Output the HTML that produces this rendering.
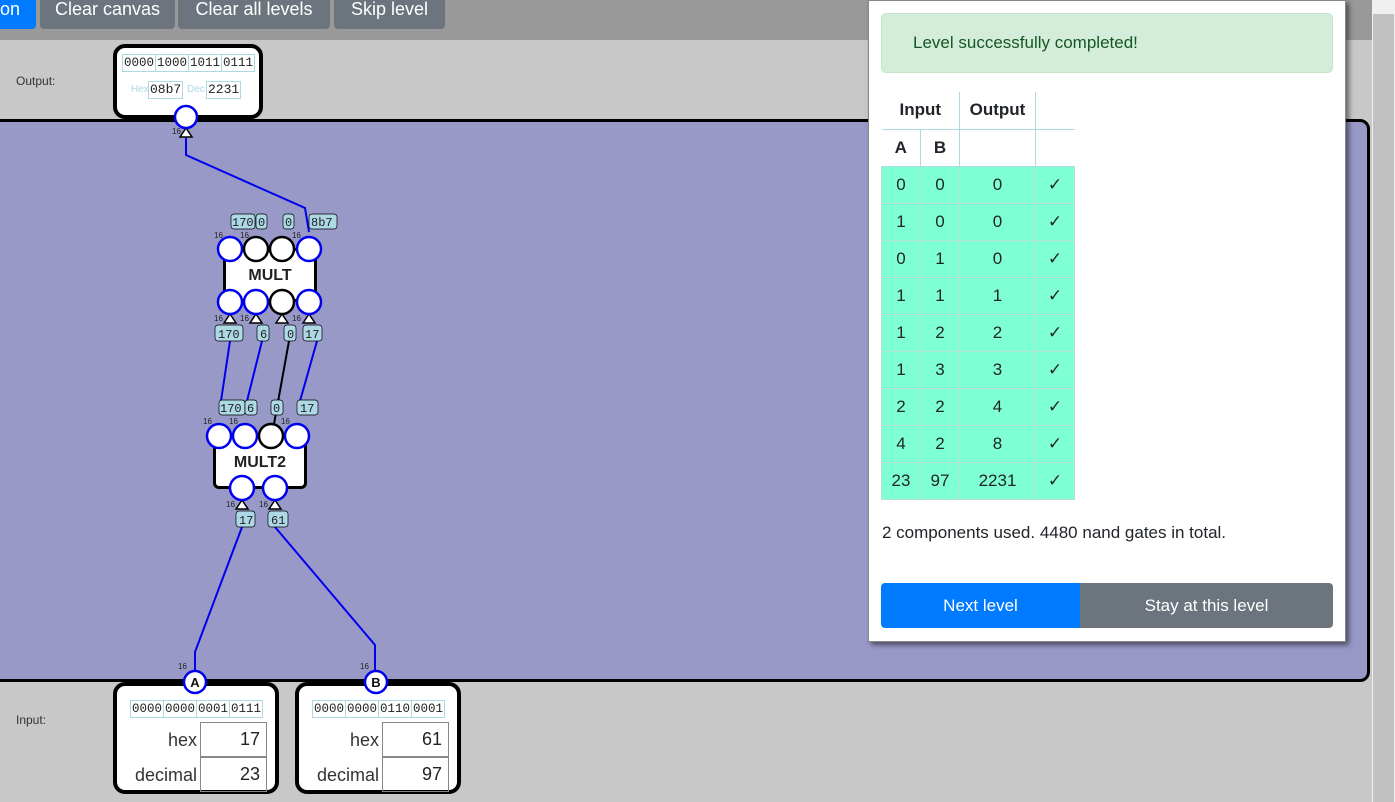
<!DOCTYPE html>
<html><head><style>
*{box-sizing:border-box;margin:0;padding:0}
body{width:1395px;height:802px;overflow:hidden;background:#c8c8c8;font-family:"Liberation Sans",sans-serif;position:relative}
.top{position:absolute;left:0;top:0;width:1372px;height:40px;background:#999}
.btn{position:absolute;top:-6px;height:35px;border-radius:4px;color:#fff;font-size:18px;line-height:30px;padding:0;text-align:center;white-space:nowrap;background:#6c757d}
.scroll{position:absolute;left:1372px;top:0;width:23px;height:802px;background:#f0f0f0}
.scroll div{position:absolute;left:1px;top:14px;width:21px;height:788px;background:#c1c1c1}
.canvas{position:absolute;left:-10px;top:119px;width:1380px;height:563px;background:#9999c8;border:3px solid #000;border-radius:10px}
.lbl{position:absolute;font-size:12px;color:#333}
.box{position:absolute;background:#fff;border:4px solid #000;border-radius:12px}
.mono{font-family:"Liberation Mono",monospace;font-size:12.5px;color:#222}
.bits{position:absolute;display:flex;border:1px solid #add8e6;white-space:nowrap}
.bits span{border-right:1px solid #add8e6;padding:0 1px;line-height:16px}
.bits span:last-child{border-right:0}
.panel{position:absolute;left:868px;top:0;width:478px;height:642px;background:#fff;box-shadow:3px 3px 5px rgba(0,0,0,.5);border:1px solid #888}
.alert{position:absolute;left:12px;top:12px;width:452px;height:60px;background:#d4edda;border:1px solid #c3e6cb;border-radius:5px;color:#155724;font-size:17px;line-height:58px;padding-left:31px}
table{position:absolute;left:12px;top:91px;border-collapse:collapse;font-size:17px;color:#212529}
td,th{border:1px solid #add8e6;text-align:center;height:37px;padding:0}
th{font-weight:bold}
tr.ok td{background:#7fffd4;border-color:#b8e0d0}
.inp{position:absolute;right:8px;width:67px;height:35px;border:1px solid #888;text-align:right;font-size:18px;line-height:33px;padding-right:6px;color:#222}
.it{position:absolute;font-size:18px;color:#333}
</style></head><body>
<div class="top"></div>
<div class="btn" style="left:-10px;background:#007bff;width:46px;text-align:left;padding-left:10px">on</div>
<div class="btn" style="left:40px;width:135px">Clear canvas</div>
<div class="btn" style="left:178px;width:152px">Clear all levels</div>
<div class="btn" style="left:334px;width:111px">Skip level</div>
<div class="scroll"><div></div></div>
<div class="canvas"></div>
<div class="lbl" style="left:16px;top:74px">Output:</div>
<div class="lbl" style="left:16px;top:713px">Input:</div>

<div class="box" style="left:113px;top:44px;width:150px;height:75px">
 <div class="bits mono" style="left:5px;top:6px"><span>0000</span><span>1000</span><span>1011</span><span>0111</span></div>
 <div style="position:absolute;left:14px;top:33px;color:#add8e6;font-size:10px;line-height:18px">Hex</div>
 <div class="bits mono" style="left:31px;top:33px;font-size:13px"><span>08b7</span></div>
 <div style="position:absolute;left:70px;top:33px;color:#add8e6;font-size:10px;line-height:18px">Dec</div>
 <div class="bits mono" style="left:89px;top:33px;font-size:13px"><span>2231</span></div>
</div>

<div class="box" style="left:223px;top:248px;width:94px;height:54px;border-width:3px;border-radius:6px"><div style="text-align:center;font-weight:bold;font-size:16px;margin-top:16px;color:#222">MULT</div></div>
<div class="box" style="left:213px;top:434px;width:94px;height:55px;border-width:3px;border-radius:6px"><div style="text-align:center;font-weight:bold;font-size:16px;margin-top:17px;color:#222">MULT2</div></div>

<div class="box" style="left:113px;top:682px;width:166px;height:112px">
 <div class="bits mono" style="left:13px;top:14px"><span>0000</span><span>0000</span><span>0001</span><span>0111</span></div>
 <div class="it" style="right:78px;top:44px">hex</div><div class="inp" style="top:36px">17</div>
 <div class="it" style="right:78px;top:79px">decimal</div><div class="inp" style="top:71px">23</div>
</div>
<div class="box" style="left:295px;top:682px;width:166px;height:112px">
 <div class="bits mono" style="left:13px;top:14px"><span>0000</span><span>0000</span><span>0110</span><span>0001</span></div>
 <div class="it" style="right:78px;top:44px">hex</div><div class="inp" style="top:36px">61</div>
 <div class="it" style="right:78px;top:79px">decimal</div><div class="inp" style="top:71px">97</div>
</div>

<svg width="1395" height="802" style="position:absolute;left:0;top:0">
<g fill="none" stroke="#0000ee" stroke-width="2">
<polyline points="186,138 186,155 305,208 309,232"/>
<line x1="230" y1="341" x2="221" y2="401"/>
<line x1="262" y1="341" x2="247" y2="401"/>
<line x1="317" y1="341" x2="300" y2="401"/>
<polyline points="242,527 195,652 195,672"/>
<polyline points="275,527 375,645 375,672"/>
</g>
<line x1="289" y1="341" x2="274" y2="424" stroke="#000" stroke-width="2"/>
<g font-family="Liberation Sans" font-size="8" fill="#222">
<text x="172" y="134">16</text>
<text x="214" y="238">16</text><text x="240" y="238">16</text><text x="292" y="238">16</text>
<text x="214" y="321">16</text><text x="240" y="321">16</text><text x="292" y="321">16</text>
<text x="203" y="424">16</text><text x="229" y="424">16</text><text x="281" y="424">16</text>
<text x="226" y="507">16</text><text x="259" y="507">16</text>
<text x="178" y="669">16</text><text x="360" y="669">16</text>
</g>
<g stroke="#000" stroke-width="1.5" fill="#fff">
<polygon points="186,128 180,137 192,137"/>
<polygon points="230,314 224,323 236,323"/><polygon points="256,314 250,323 262,323"/>
<polygon points="282,314 276,323 288,323"/><polygon points="309,314 303,323 315,323"/>
<polygon points="242,500 236,509 248,509"/><polygon points="275,500 269,509 281,509"/>
</g>
<g stroke-width="2.5" fill="#fff">
<circle cx="186" cy="117" r="11" stroke="#0000ee"/>
<circle cx="230" cy="249" r="12" stroke="#0000ee"/><circle cx="256" cy="249" r="12" stroke="#000"/>
<circle cx="282" cy="249" r="12" stroke="#000"/><circle cx="309" cy="249" r="12" stroke="#0000ee"/>
<circle cx="230" cy="302" r="12" stroke="#0000ee"/><circle cx="256" cy="302" r="12" stroke="#0000ee"/>
<circle cx="282" cy="302" r="12" stroke="#000"/><circle cx="309" cy="302" r="12" stroke="#0000ee"/>
<circle cx="219" cy="436" r="12" stroke="#0000ee"/><circle cx="245" cy="436" r="12" stroke="#0000ee"/>
<circle cx="271" cy="436" r="12" stroke="#000"/><circle cx="297" cy="436" r="12" stroke="#0000ee"/>
<circle cx="242" cy="488" r="12" stroke="#0000ee"/><circle cx="275" cy="488" r="12" stroke="#0000ee"/>
<circle cx="195" cy="682" r="11" stroke="#0000ee"/><circle cx="376" cy="682" r="11" stroke="#0000ee"/>
</g>
<g font-family="Liberation Sans" font-weight="bold" font-size="13" fill="#111" text-anchor="middle">
<text x="195" y="687">A</text><text x="376" y="687">B</text></g>
<g fill="#add8e6" stroke="#000" stroke-width="0.7">
<rect x="231" y="214" width="24" height="15" rx="3"/><rect x="256" y="214" width="11" height="15" rx="3"/>
<rect x="283" y="214" width="11" height="15" rx="3"/><rect x="309" y="214" width="28" height="15" rx="3"/>
<rect x="215" y="325" width="28" height="16" rx="3"/><rect x="257" y="325" width="12" height="16" rx="3"/>
<rect x="284" y="325" width="12" height="16" rx="3"/><rect x="303" y="325" width="19" height="16" rx="3"/>
<rect x="219" y="400" width="26" height="15" rx="3"/><rect x="245" y="400" width="12" height="15" rx="3"/>
<rect x="271" y="400" width="12" height="15" rx="3"/><rect x="297" y="400" width="21" height="15" rx="3"/>
<rect x="236" y="511" width="19" height="16" rx="3"/><rect x="268" y="511" width="20" height="16" rx="3"/>
</g>
<g font-family="Liberation Mono" font-size="12" fill="#222">
<text x="232" y="226">170</text><text x="258" y="226">0</text><text x="285" y="226">0</text><text x="311" y="226">8b7</text>
<text x="218" y="338">170</text><text x="260" y="338">6</text><text x="287" y="338">0</text><text x="305" y="338">17</text>
<text x="220" y="412">170</text><text x="247" y="412">6</text><text x="273" y="412">0</text><text x="300" y="412">17</text>
<text x="239" y="524">17</text><text x="271" y="524">61</text>
</g>
</svg>

<div class="panel">
 <div class="alert">Level successfully completed!</div>
 <table>
  <tr><th colspan="2" style="width:78px;border-top:0;border-left:0">Input</th><th style="width:76px;border-top:0">Output</th><th style="width:39px;border-top:0;border-right:0"></th></tr>
  <tr><th style="width:39px;border-left:0">A</th><th style="width:39px">B</th><th></th><th style="border-right:0"></th></tr>
  <tr class="ok"><td>0</td><td>0</td><td>0</td><td>✓</td></tr>
  <tr class="ok"><td>1</td><td>0</td><td>0</td><td>✓</td></tr>
  <tr class="ok"><td>0</td><td>1</td><td>0</td><td>✓</td></tr>
  <tr class="ok"><td>1</td><td>1</td><td>1</td><td>✓</td></tr>
  <tr class="ok"><td>1</td><td>2</td><td>2</td><td>✓</td></tr>
  <tr class="ok"><td>1</td><td>3</td><td>3</td><td>✓</td></tr>
  <tr class="ok"><td>2</td><td>2</td><td>4</td><td>✓</td></tr>
  <tr class="ok"><td>4</td><td>2</td><td>8</td><td>✓</td></tr>
  <tr class="ok"><td>23</td><td>97</td><td>2231</td><td>✓</td></tr>
 </table>
 <div style="position:absolute;left:13px;top:522px;font-size:17px;color:#212529">2 components used. 4480 nand gates in total.</div>
 <div style="position:absolute;left:12px;top:582px;width:199px;height:45px;background:#007bff;color:#fff;font-size:17px;line-height:45px;text-align:center;border-radius:4px 0 0 4px">Next level</div>
 <div style="position:absolute;left:211px;top:582px;width:253px;height:45px;background:#6c757d;color:#fff;font-size:17px;line-height:45px;text-align:center;border-radius:0 4px 4px 0">Stay at this level</div>
</div>
</body></html>
